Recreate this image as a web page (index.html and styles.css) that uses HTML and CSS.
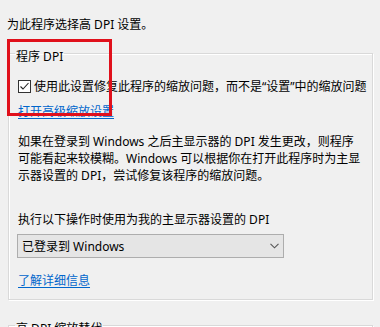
FILE: index.html
```html
<!DOCTYPE html>
<html lang="zh-CN">
<head>
<meta charset="utf-8">
<title>高 DPI 设置</title>
<link rel="stylesheet" href="styles.css">
</head>
<body>
<div class="page">
  <p class="intro">为此程序选择高 DPI 设置。</p>

  <fieldset class="group">
    <legend class="group-title">程序 DPI</legend>
    <label class="check-row">
      <span class="checkbox">
        <svg width="13" height="13" viewBox="0 0 13 13"><polyline points="2.5,6.5 5,9 10.5,3" fill="none" stroke="#222" stroke-width="1.1"/></svg>
      </span>
      <span>使用此设置修复此程序的缩放问题，而不是“设置”中的缩放问题</span>
    </label>
    <a class="link link-advanced" href="#">打开高级缩放设置</a>
    <p class="desc">如果在登录到 Windows 之后主显示器的 DPI 发生更改，则程序<br>可能看起来较模糊。Windows 可以根据你在打开此程序时为主显<br>示器设置的 DPI，尝试修复该程序的缩放问题。</p>
    <p class="select-label">执行以下操作时使用为我的主显示器设置的 DPI</p>
    <div class="select">
      <span>已登录到 Windows</span>
      <svg class="chevron" width="9" height="6" viewBox="0 0 9 6"><polyline points="0.5,0.8 4.5,4.8 8.5,0.8" fill="none" stroke="#555" stroke-width="1.1"/></svg>
    </div>
    <a class="link link-more" href="#">了解详细信息</a>
  </fieldset>

  <fieldset class="group group-next">
    <legend class="group-title">高 DPI 缩放替代</legend>
  </fieldset>

  <div class="highlight"></div>
</div>
</body>
</html>
```

FILE: styles.css
```css
html, body {
  margin: 0;
  padding: 0;
  background: #f0f0f0;
  overflow: hidden;
}

.page {
  position: relative;
  width: 380px;
  height: 327px;
  overflow: hidden;
  font-family: "Noto Sans", "Noto Sans CJK SC", sans-serif;
  font-size: 12px;
  line-height: 17px;
  color: #000;
}

.intro {
  margin: 0;
  padding: 16px 0 0 7px;
}

.group {
  margin: 9px 0 0 8px;
  padding: 0 0 10px 9px;
  border: 1px solid #d9d9d9;
  box-shadow: inset 1px 1px 0 #fff, 1px 1px 0 #fff;
  min-width: 0;
  box-sizing: border-box;
  width: 365px;
}

.group-title {
  padding: 6px 1px 0 1px;
  margin-left: -3px;
  line-height: 17px;
}

.check-row {
  display: flex;
  align-items: center;
  gap: 3px;
  margin-top: 13px;
  white-space: nowrap;
}

.checkbox {
  width: 13px;
  height: 13px;
  box-sizing: border-box;
  border: 1px solid #333;
  background: #fff;
  display: flex;
  flex: none;
}

.checkbox svg {
  margin: -1px;
}

.link {
  display: block;
  width: max-content;
  color: #0066cc;
  text-decoration: underline;
  text-underline-offset: 2px;
}

.link-advanced {
  margin-top: 8px;
}

.desc {
  margin: 13px 0 0;
  white-space: nowrap;
}

.select-label {
  margin: 27px 0 0;
}

.select {
  margin: 6px 0 0 -1px;
  width: 267px;
  height: 24px;
  box-sizing: border-box;
  border: 1px solid #adadad;
  background: #e5e5e5;
  display: flex;
  align-items: center;
  justify-content: space-between;
  padding: 0 4px 0 4px;
}

.link-more {
  margin-top: 14px;
}

.group-next {
  margin-top: 14px;
  height: 40px;
}

.highlight {
  position: absolute;
  left: 7px;
  top: 39px;
  width: 105px;
  height: 77px;
  box-sizing: border-box;
  border: 3px solid #e0101b;
}
```
